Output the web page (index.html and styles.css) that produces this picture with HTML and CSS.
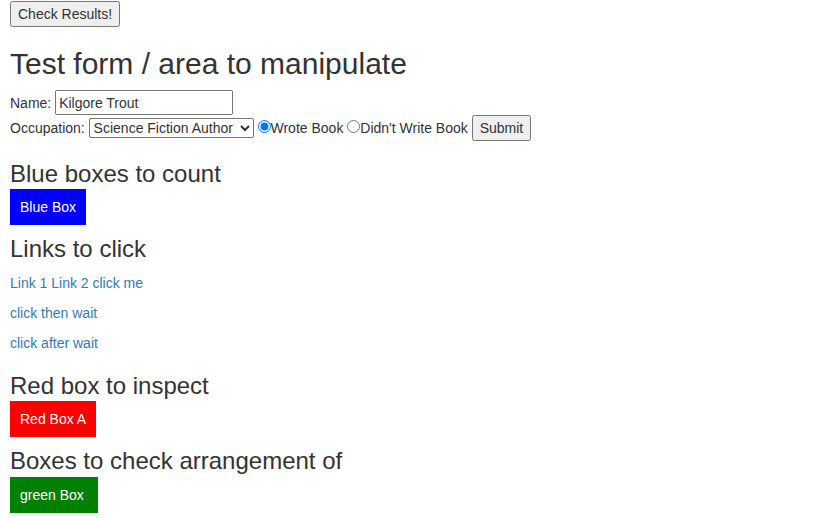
FILE: index.html
```html
<!DOCTYPE html>
<html lang="en">
<head>
<meta charset="utf-8">
<title>Test page</title>
<link rel="stylesheet" href="styles.css">
</head>
<body>
<div class="page">
  <button type="button" class="btn-check">Check Results!</button>

  <h2 class="page-title">Test form / area to manipulate</h2>
  <form class="test-form">
    <div class="form-line">Name: <input type="text" class="name-input" value="Kilgore Trout"></div>
    <div class="form-line">Occupation: <select class="occupation">
        <option>Science Fiction Author</option>
        <option>Other</option>
      </select> <input type="radio" name="wrote" checked class="radio">Wrote Book <input type="radio" name="wrote" class="radio">Didn't Write Book <button type="button" class="btn-submit">Submit</button></div>
  </form>

  <h3 class="section-title section-title--first">Blue boxes to count</h3>
  <div class="box box--blue">Blue Box</div>

  <h3 class="section-title">Links to click</h3>
  <div class="link-list">
    <p><a href="#">Link 1</a> <a href="#">Link 2</a> <a href="#">click me</a></p>
    <p><a href="#">click then wait</a></p>
    <p><a href="#">click after wait</a></p>
  </div>

  <h3 class="section-title">Red box to inspect</h3>
  <div class="box box--red">Red Box A</div>

  <h3 class="section-title">Boxes to check arrangement of</h3>
  <div class="box box--green">green Box</div>
</div>
</body>
</html>
```

FILE: styles.css
```css
body {
  margin: 0;
  font-family: "Liberation Sans", Arial, sans-serif;
  font-size: 14px;
  line-height: 1.42857143;
  color: #333;
  background: #fff;
}

.page {
  padding: 1px 10px 0;
}

button,
input,
select {
  font: inherit;
  color: inherit;
  margin: 0;
}

.page-title {
  font-size: 30px;
  font-weight: 500;
  line-height: 1.1;
  margin: 20px 0 10px;
}

.test-form {
  margin: 0;
}

.name-input {
  box-sizing: border-box;
  width: 178px;
  height: 25px;
}

.occupation {
  width: 165px;
  height: 20px;
}

.radio {
  margin: 4px 0 0;
  line-height: normal;
}

.section-title {
  font-size: 24px;
  font-weight: 500;
  line-height: 1.1;
  margin: 11px 0 2px;
}

.section-title--first {
  margin-top: 20px;
}

.box {
  display: inline-block;
  vertical-align: top;
  padding: 10px;
  line-height: 16px;
  color: #fff;
}

.box--blue {
  background: #00f;
}

.box--red {
  background: #f00;
}

.box--green {
  background: #008000;
  padding-right: 14px;
}

.link-list {
  margin: 10px 0 20px;
}

.link-list p {
  margin: 0 0 10px;
}

.link-list a {
  color: #337ab7;
  text-decoration: none;
}
```
